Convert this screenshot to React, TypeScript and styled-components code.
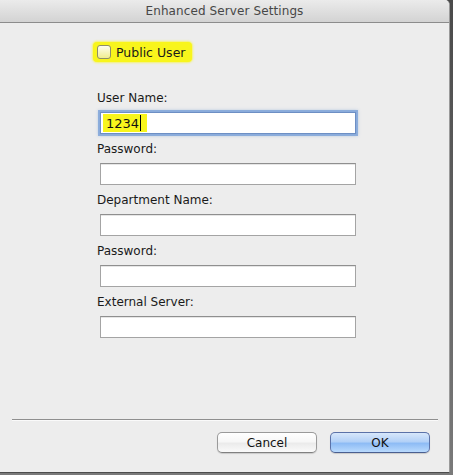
import React from "react";
import styled, { createGlobalStyle } from "styled-components";

const GlobalStyle = createGlobalStyle`
  html, body {
    margin: 0;
    padding: 0;
    background: #6f6f6f;
  }
  body {
    font-family: "DejaVu Sans", "Liberation Sans", sans-serif;
    font-size: 12px;
    color: #1a1a1a;
  }
`;

const Page = styled.div`
  width: 453px;
  height: 475px;
  overflow: hidden;
  background: linear-gradient(#4a4a4a, #7a7a7a);
`;

const Window = styled.div`
  width: 450px;
  height: 473px;
  box-sizing: border-box;
  display: flex;
  flex-direction: column;
  background: #ededed;
  border-right: 1px solid #9a9a9a;
  border-bottom: 1px solid #4c4c4c;
  border-top-right-radius: 5px;
  overflow: hidden;
`;

const TitleBar = styled.div`
  height: 22px;
  flex: 0 0 22px;
  display: flex;
  align-items: center;
  justify-content: center;
  background: linear-gradient(#ebebeb, #d3d3d3);
  border-bottom: 1px solid #8c8c8c;
  color: #474747;
  font-size: 12px;
  letter-spacing: 0.1px;
`;

const Content = styled.div`
  flex: 1;
  display: flex;
  flex-direction: column;
  padding: 19px 0 0 93px;
`;

const CheckRow = styled.label`
  align-self: flex-start;
  display: flex;
  align-items: center;
  gap: 5px;
  height: 20px;
  padding: 0 7px 0 4px;
  background: #f8f51c;
  border-radius: 4px;
  box-shadow: 0 0 2px 1px rgba(248, 245, 28, 0.6);
  font-size: 12.5px;
`;

const Box = styled.span`
  width: 12px;
  height: 12px;
  border: 1px solid #8e8e6a;
  border-radius: 3px;
  background: linear-gradient(#fdfdf0, #f0ee90);
`;

const Fields = styled.div`
  display: flex;
  flex-direction: column;
  margin-top: 29px;
  padding-left: 4px;
`;

const Field = styled.div`
  display: flex;
  flex-direction: column;
  margin-bottom: 8px;
`;

const Label = styled.div`
  height: 15px;
  line-height: 15px;
  margin-bottom: 6px;
`;

const TextBox = styled.div<{ $focused?: boolean }>`
  box-sizing: border-box;
  width: 256px;
  height: 22px;
  margin-left: 3px;
  display: flex;
  align-items: stretch;
  padding: 1px 2px;
  background: #fff;
  border: 1px solid ${(p) => (p.$focused ? "#6d8fc4" : "#a4a4a4")};
  border-top-color: ${(p) => (p.$focused ? "#6d8fc4" : "#8f8f8f")};
  box-shadow: ${(p) =>
    p.$focused
      ? "0 0 0 2px rgba(118, 158, 215, 0.75), 0 0 3px 2px rgba(118, 158, 215, 0.4)"
      : "inset 0 1px 0 #e6e6e6"};
`;

const Selected = styled.span`
  display: flex;
  align-items: center;
  background: #f8f51c;
  padding: 0 6px 0 3px;
  font-size: 13px;
  color: #111;
`;

const Caret = styled.span`
  display: inline-block;
  width: 1px;
  height: 16px;
  background: #000;
  margin-left: 1px;
`;

const Footer = styled.div`
  margin-top: auto;
  display: flex;
  flex-direction: column;
  padding: 0 11px 19px 12px;
`;

const Separator = styled.div`
  height: 1px;
  background: #8f8f8f;
  box-shadow: 0 1px 0 #fafafa;
`;

const Buttons = styled.div`
  display: flex;
  justify-content: flex-end;
  gap: 13px;
  padding: 12px 8px 0 0;
`;

const Button = styled.button<{ $primary?: boolean }>`
  box-sizing: border-box;
  width: 100px;
  height: 21px;
  padding: 0;
  font-family: "DejaVu Sans", "Liberation Sans", sans-serif;
  font-size: 12px;
  color: #111;
  border-radius: 5px;
  border: 1px solid ${(p) => (p.$primary ? "#5b72a8" : "#9a9a9a")};
  border-bottom-color: ${(p) => (p.$primary ? "#4a5f90" : "#808080")};
  background: ${(p) =>
    p.$primary
      ? "linear-gradient(#d7e7fb 0%, #b3d1f7 45%, #8ebcf5 55%, #b9dafd 100%)"
      : "linear-gradient(#ffffff 0%, #f7f7f7 45%, #ebebeb 55%, #fafafa 100%)"};
  box-shadow: 0 1px 1px rgba(0, 0, 0, 0.15);
`;

const fields = [
  { label: "User Name:", focused: true },
  { label: "Password:" },
  { label: "Department Name:" },
  { label: "Password:" },
  { label: "External Server:" },
];

export default function App() {
  return (
    <>
      <GlobalStyle />
      <Page>
        <Window>
          <TitleBar>Enhanced Server Settings</TitleBar>
          <Content>
            <CheckRow>
              <Box />
              Public User
            </CheckRow>
            <Fields>
              {fields.map((f, i) => (
                <Field key={i}>
                  <Label>{f.label}</Label>
                  <TextBox $focused={f.focused}>
                    {f.focused && (
                      <Selected>
                        1234
                        <Caret />
                      </Selected>
                    )}
                  </TextBox>
                </Field>
              ))}
            </Fields>
          </Content>
          <Footer>
            <Separator />
            <Buttons>
              <Button>Cancel</Button>
              <Button $primary>OK</Button>
            </Buttons>
          </Footer>
        </Window>
      </Page>
    </>
  );
}
